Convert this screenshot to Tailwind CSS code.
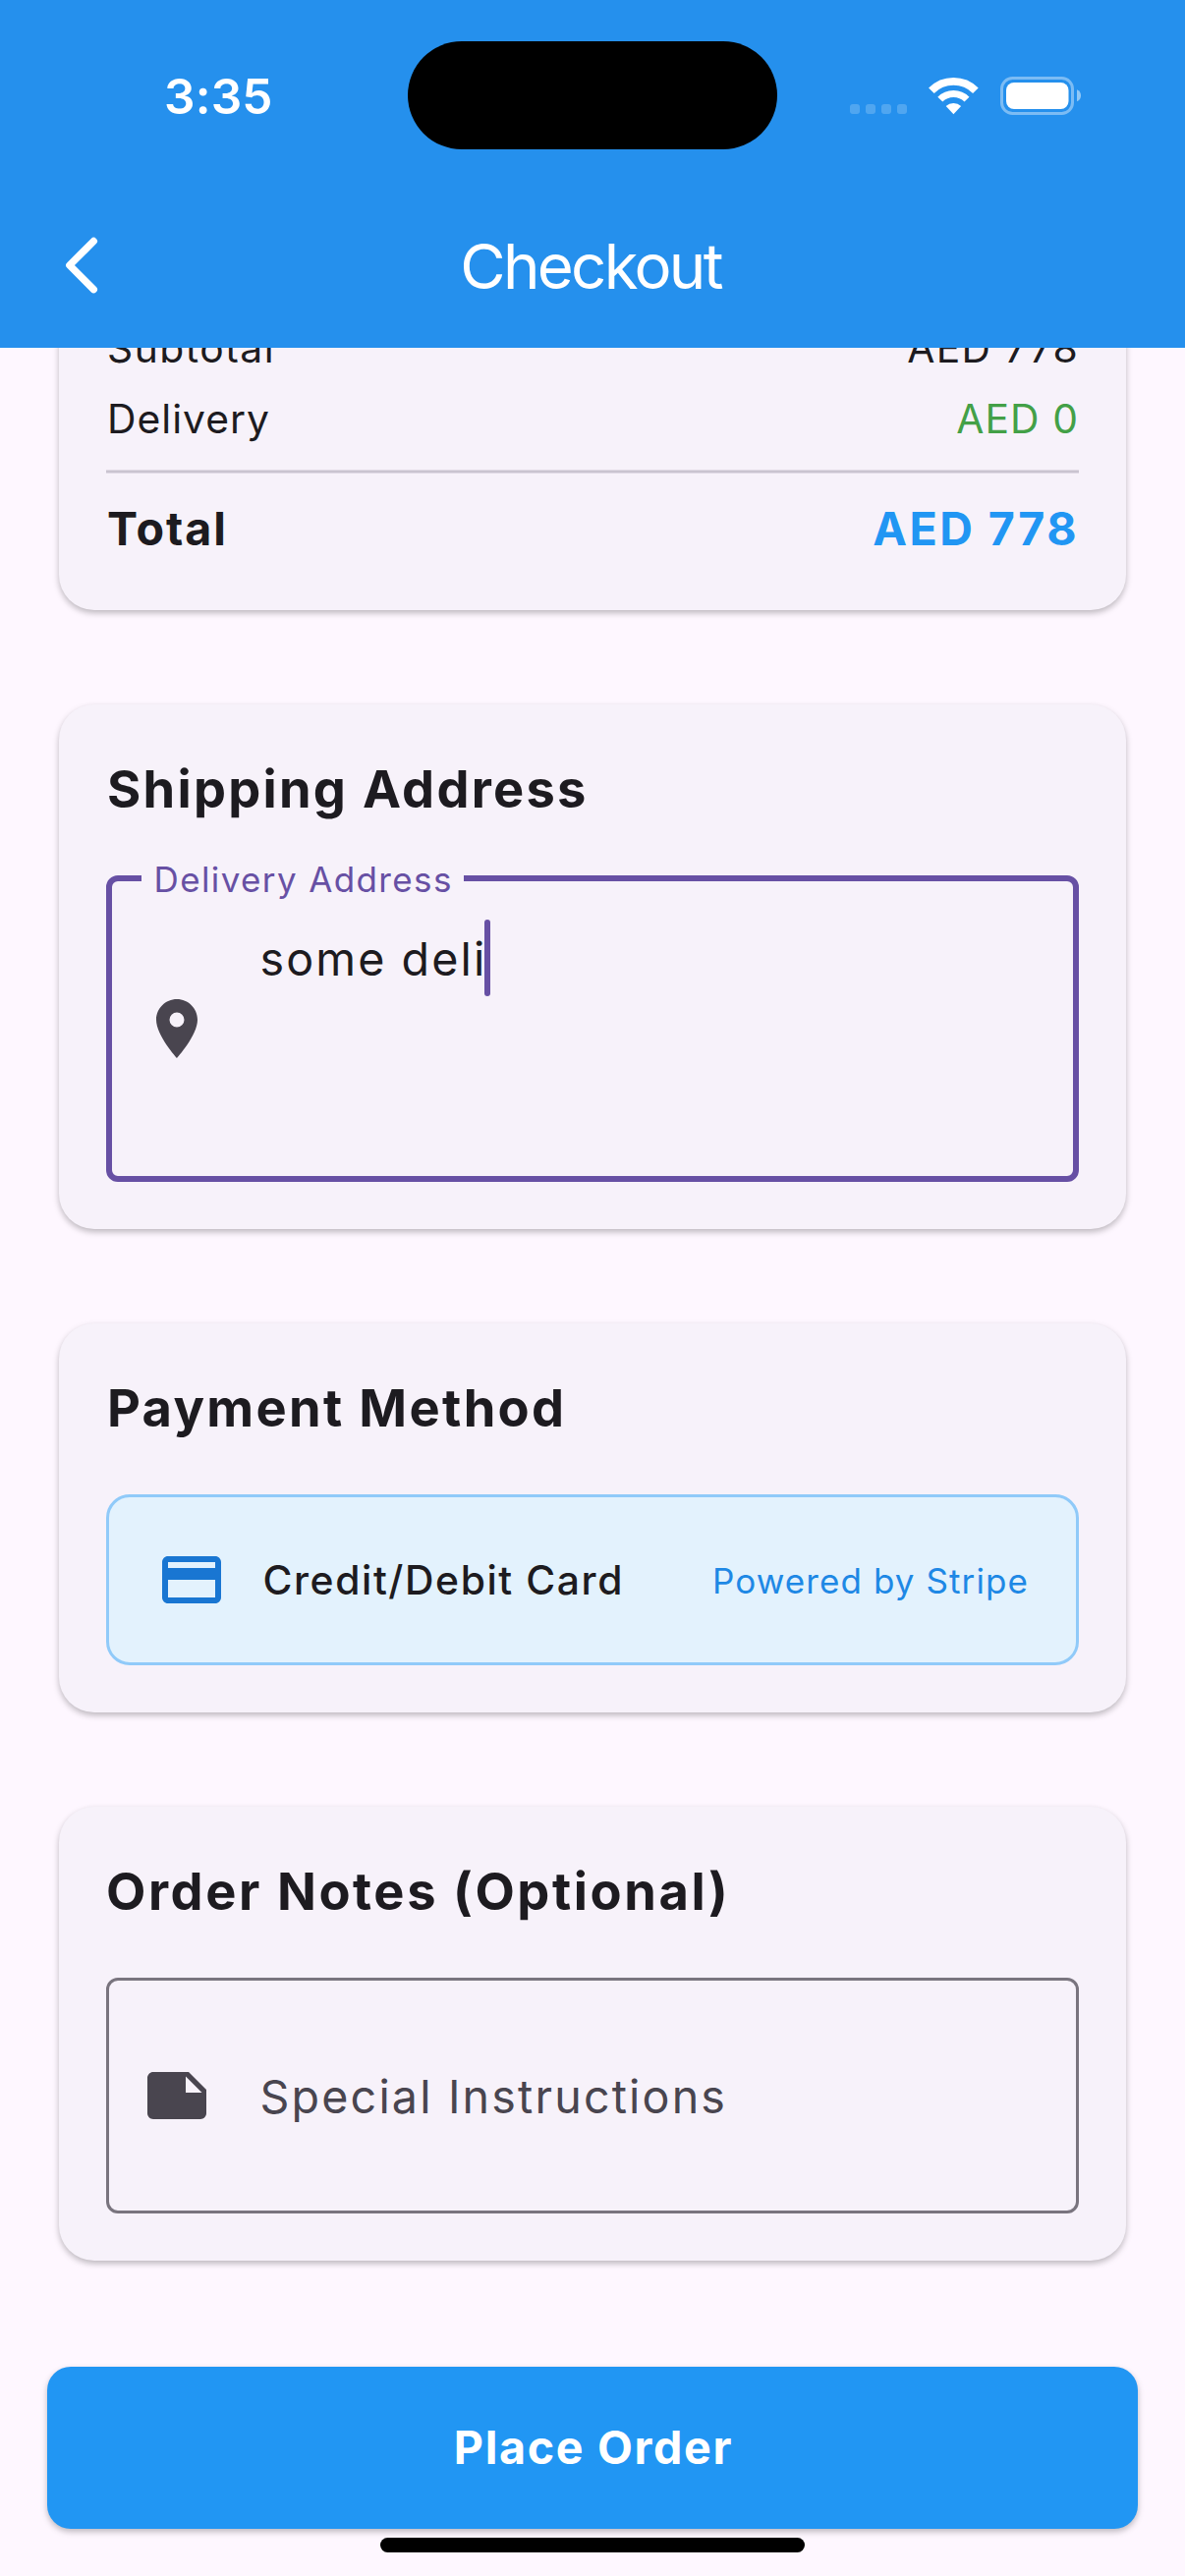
<!DOCTYPE html>
<html lang="en">
<head>
<meta charset="utf-8">
<title>Checkout</title>
<script src="https://cdn.jsdelivr.net/npm/@tailwindcss/browser@4"></script>
</head>
<body class="bg-[#fef7ff]">
<div class="flex h-[2622px] w-[1206px] flex-col overflow-hidden bg-[#fef7ff] font-['Inter','Liberation_Sans',sans-serif] text-[#1d1b20]">

  <header class="z-10 h-[354px] shrink-0 bg-[#2590ed] text-white">
    <!-- status bar -->
    <div class="flex h-[186px] items-start">
      <div class="mt-[68px] w-[415px] pl-[167px] text-[49.5px] leading-[60px] font-semibold tracking-[0.19px]">3:35</div>
      <div class="mt-[42px] h-[110px] w-[376px] rounded-full bg-black"></div>
      <div class="mt-[77px] ml-[74px] flex h-[41px] items-start">
        <div class="mt-[29px] flex gap-[6px]">
          <span class="size-[10px] rounded-[3px] bg-white/20"></span>
          <span class="size-[10px] rounded-[3px] bg-white/20"></span>
          <span class="size-[10px] rounded-[3px] bg-white/20"></span>
          <span class="size-[10px] rounded-[3px] bg-white/20"></span>
        </div>
        <svg class="ml-[22px] h-[41px] w-[51px]" viewBox="945 77 51 41" fill="none" stroke="#fff">
          <path stroke-width="7.9" d="M947.9 92.2A31.8 31.8 0 0 1 992.9 92.2"/>
          <path stroke-width="7" d="M956.8 101.1A19.2 19.2 0 0 1 984 101.1"/>
          <path stroke="none" fill="#fff" d="M970.4 116.2L962.7 108A11.2 11.2 0 0 1 978.1 108Z"/>
        </svg>
        <svg class="ml-[21px] h-[41px] w-[84px]" viewBox="1017 77 84 41">
          <rect x="1019.5" y="79.5" width="72" height="36" rx="11" fill="none" stroke="#fff" stroke-opacity=".4" stroke-width="3"/>
          <rect x="1024" y="84" width="63.5" height="27" rx="8" fill="#fff"/>
          <path d="M1096 91.3Q1100 93 1100 97.3T1096 103.3Z" fill="#fff" fill-opacity=".5"/>
        </svg>
      </div>
    </div>
    <!-- app bar -->
    <div class="grid h-[168px] grid-cols-[144px_1fr_144px] items-center">
      <svg class="ml-[63px] size-[60px]" viewBox="64 240 60 60" fill="none" stroke="#fff" stroke-width="7.4" stroke-linecap="round" stroke-linejoin="round"><path d="M96.3 245.5L71.8 270L96.3 294.7" /></svg>
      <h1 class="mt-[2px] pr-[4px] text-center text-[63.5px] leading-[80px] tracking-[-2.7px]">Checkout</h1>
    </div>
  </header>

  <main class="flex flex-col px-[60px]">
    <!-- order summary, scrolled under the app bar -->
    <section class="-mt-9 rounded-b-[36px] bg-[#f7f2fa] px-12 pb-[47px] shadow-[0_3px_6px_rgba(0,0,0,0.26)]">
      <div class="flex justify-between text-[40.8px] leading-[72px]">
        <span class="pl-px tracking-[1.5px]">Subtotal</span>
        <span class="tracking-[1.37px]">AED 778</span>
      </div>
      <div class="flex justify-between text-[40.8px] leading-[72px]">
        <span class="pl-px tracking-[1.02px]">Delivery</span>
        <span class="tracking-[1.1px] text-[#43a047]">AED 0</span>
      </div>
      <div class="mt-4 h-1 border-y border-[#e0dae5] bg-[#cac4d0]"></div>
      <div class="mt-5 flex justify-between text-[46.6px] leading-[72px] font-bold">
        <span class="pl-px tracking-[1.94px]">Total</span>
        <span class="tracking-[2.47px] text-[#2196f3]">AED 778</span>
      </div>
    </section>

    <section class="mt-24 rounded-[36px] bg-[#f7f2fa] p-12 shadow-[0_3px_6px_rgba(0,0,0,0.26)]">
      <h2 class="pl-px text-[52.4px] leading-[76px] font-bold tracking-[2.27px]">Shipping Address</h2>
      <div class="relative mt-[50px] flex h-[312px] items-center rounded-xl border-6 border-[#6750a4] pl-[30px]">
        <span class="absolute -top-[26px] left-[30px] h-12 w-[328px] bg-[#f7f2fa] pl-[12.5px] text-[35px] leading-[48px] tracking-[1.38px] whitespace-nowrap text-[#6750a4]">Delivery Address</span>
        <svg class="size-[72px]" viewBox="0 0 24 24" fill="#49454f"><path d="M12 2C8.13 2 5 5.13 5 9c0 5.25 7 13 7 13s7-7.75 7-13c0-3.87-3.13-7-7-7zm0 9.5a2.5 2.5 0 0 1 0-5 2.5 2.5 0 0 1 0 5z"/></svg>
        <div class="mt-[39px] ml-[48.5px] flex self-start">
          <span class="mt-px text-[46.6px] leading-[78px] tracking-[2.1px] whitespace-pre">some deli</span>
          <span class="-ml-[2.5px] h-[78px] w-[6px] rounded-full bg-[#6750a4]"></span>
        </div>
      </div>
    </section>

    <section class="mt-24 rounded-[36px] bg-[#f7f2fa] p-12 shadow-[0_3px_6px_rgba(0,0,0,0.26)]">
      <h2 class="pl-px text-[52.4px] leading-[76px] font-bold tracking-[2.34px]">Payment Method</h2>
      <div class="mt-[50px] flex h-[174px] items-center rounded-3xl border-3 border-[#90caf9] bg-[#e3f2fd] px-12">
        <svg class="size-[72px]" viewBox="0 0 24 24" fill="#1976d2"><path d="M20 4H4c-1.11 0-1.99.89-1.99 2L2 18c0 1.11.89 2 2 2h16c1.11 0 2-.89 2-2V6c0-1.11-.89-2-2-2zm0 14H4v-6h16v6zm0-10H4V6h16v2z"/></svg>
        <span class="mt-px ml-[36.5px] text-[40.8px] font-medium tracking-[1.6px]">Credit/Debit Card</span>
        <span class="mt-[2px] ml-auto text-[35px] tracking-[1.09px] text-[#1e88e5]">Powered by Stripe</span>
      </div>
    </section>

    <section class="mt-24 rounded-[36px] bg-[#f7f2fa] p-12 shadow-[0_3px_6px_rgba(0,0,0,0.26)]">
      <h2 class="text-[52.4px] leading-[76px] font-bold tracking-[2.58px]">Order Notes (Optional)</h2>
      <div class="mt-[50px] flex h-[240px] items-center rounded-xl border-3 border-[#79747e] pl-[33px]">
        <svg class="size-[72px]" viewBox="0 0 24 24" fill="#49454f"><path d="M22 10l-6-6H4c-1.1 0-2 .9-2 2v12.01c0 1.1.9 1.99 2 1.99l16-.01c1.1 0 2-.89 2-1.99v-8zm-7-4.5l5.5 5.5H15V5.5z"/></svg>
        <span class="mt-[3px] ml-[48.5px] text-[46.6px] tracking-[2.17px] text-[#49454f]">Special Instructions</span>
      </div>
    </section>
  </main>

  <footer class="mt-[108px] flex flex-col items-center px-12">
    <button class="h-[165px] w-full rounded-3xl bg-[#2196f3] pl-[2px] text-[46.6px] font-bold tracking-[1.67px] text-white shadow-[0_3px_6px_rgba(0,0,0,0.26)]">Place Order</button>
    <div class="mt-[9px] h-[15px] w-[432px] rounded-full bg-black"></div>
  </footer>
</div>
</body>
</html>
